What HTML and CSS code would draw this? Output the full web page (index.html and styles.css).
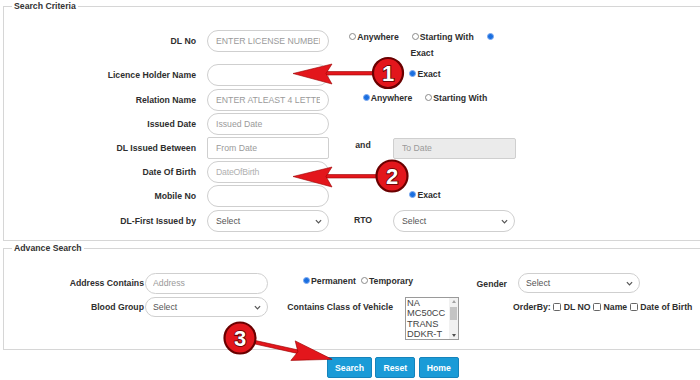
FILE: index.html
```html
<!DOCTYPE html>
<html>
<head>
<meta charset="utf-8">
<link rel="stylesheet" href="styles.css">
</head>
<body>
<fieldset class="box">
  <legend>Search Criteria</legend>
  <div class="sc">
    <label class="lbl">DL No</label>
    <input class="txt c2" placeholder="ENTER LICENSE NUMBER">
    <div class="opts wrap top"><span class="opt"><input type="radio" name="dl">Anywhere</span><span class="opt"><input type="radio" name="dl">Starting With</span><span class="opt"><input type="radio" name="dl" checked><wbr>Exact</span></div>

    <label class="lbl">Licence Holder Name</label>
    <input class="txt c2">
    <div class="opts"><span class="opt"><input type="radio" name="lh" checked>Exact</span></div>

    <label class="lbl">Relation Name</label>
    <input class="txt c2" placeholder="ENTER ATLEAST 4 LETTERS">
    <div class="opts"><span class="opt"><input type="radio" name="rn" checked>Anywhere</span><span class="opt"><input type="radio" name="rn">Starting With</span></div>

    <label class="lbl">Issued Date</label>
    <input class="txt c2" placeholder="Issued Date">

    <label class="lbl">DL Issued Between</label>
    <input class="txt c2 sq" placeholder="From Date">
    <span class="mid and">and</span>
    <input class="txt c4 sq dis" placeholder="To Date" disabled>

    <label class="lbl">Date Of Birth</label>
    <input class="txt c2 thin" placeholder="DateOfBirth">

    <label class="lbl">Mobile No</label>
    <input class="txt c2">
    <div class="opts"><span class="opt"><input type="radio" name="mn" checked>Exact</span></div>

    <label class="lbl">DL-First Issued by</label>
    <span class="sel c2"><select><option>Select</option></select><svg class="chev" viewBox="0 0 8 5"><path d="M1 1l3 3 3-3" fill="none" stroke="#555" stroke-width="1.4"/></svg></span>
    <span class="mid rto">RTO</span>
    <span class="sel c4"><select><option>Select</option></select><svg class="chev" viewBox="0 0 8 5"><path d="M1 1l3 3 3-3" fill="none" stroke="#555" stroke-width="1.4"/></svg></span>
  </div>
</fieldset>

<fieldset class="box box2">
  <legend>Advance Search</legend>
  <div class="adv">
    <label class="albl">Address Contains</label>
    <input class="txt atxt" placeholder="Address">
    <div class="aopts"><span class="opt"><input type="radio" name="ad" checked>Permanent</span><span class="opt"><input type="radio" name="ad">Temporary</span></div>
    <label class="glbl">Gender</label>
    <span class="sel asel gsel"><select><option>Select</option></select><svg class="chev" viewBox="0 0 8 5"><path d="M1 1l3 3 3-3" fill="none" stroke="#555" stroke-width="1.4"/></svg></span>

    <label class="albl rb">Blood Group</label>
    <span class="sel asel rb"><select><option>Select</option></select><svg class="chev" viewBox="0 0 8 5"><path d="M1 1l3 3 3-3" fill="none" stroke="#555" stroke-width="1.4"/></svg></span>
    <label class="cls rb">Contains Class of Vehicle</label>
    <div class="listbox">
      <div class="lbopts"><div>NA</div><div>MC50CC</div><div>TRANS</div><div>DDKR-T</div></div>
      <div class="sbar"><span class="up"></span><span class="thumb"></span><span class="dn"></span></div>
    </div>
    <div class="order rb">OrderBy:<input type="checkbox">DL NO<input type="checkbox">Name<input type="checkbox">Date of Birth</div>
  </div>
</fieldset>

<div class="btns">
  <button class="btn">Search</button>
  <button class="btn">Reset</button>
  <button class="btn">Home</button>
</div>

<svg class="marks" width="700" height="380" viewBox="0 0 700 380">
  <g class="arrow">
    <rect x="324" y="71.5" width="52" height="3.5"/>
    <polygon points="293,73.5 332,64 326,73.5 332,84"/>
  </g>
  <circle class="badge" cx="388" cy="73" r="15"/>
  <text class="num" x="388" y="81">1</text>

  <g class="arrow">
    <rect x="324" y="174.5" width="54" height="3.5"/>
    <polygon points="293,176.5 332,167 326,176.5 332,187"/>
  </g>
  <circle class="badge" cx="392" cy="176" r="15.5"/>
  <text class="num" x="392" y="184">2</text>

  <g class="arrow" transform="translate(254 342) rotate(12.5)">
    <rect x="0" y="-1.75" width="46" height="3.5"/>
    <polygon points="80,0 40,-10 45,0 40,10"/>
  </g>
  <circle class="badge" cx="240" cy="338" r="15.5"/>
  <text class="num" x="240" y="346">3</text>
</svg>
</body>
</html>
```
FILE: styles.css
```css
* { box-sizing: border-box; }
html, body { margin: 0; background: #fff; }
body {
  position: relative;
  width: 700px;
  height: 380px;
  overflow: hidden;
  font-family: "Liberation Sans", Arial, sans-serif;
  font-size: 8.7px;
  color: #2e2e2e;
}

.box {
  margin: 0 0 0 3px;
  padding: 0;
  border: 1px solid #d6d6d6;
  border-right: none;
  min-width: 0;
}
.box legend {
  margin-left: 8px;
  padding: 0 2px;
  font-weight: bold;
  font-size: 8.7px;
  line-height: 12px;
  color: #333;
}
.box2 { margin-top: 1px; }

/* Search criteria grid */
.sc {
  display: grid;
  grid-template-columns: 203px 126px 60px 124px;
  grid-template-rows: 45px 24px 25px 24px 24px 24px 24px 25px;
  align-items: center;
  padding: 6px 0 7px;
}
.lbl {
  grid-column: 1;
  text-align: right;
  padding-right: 11px;
  font-weight: bold;
}
.c2 { grid-column: 2; }
.c4 { grid-column: 4; }
.mid {
  grid-column: 3;
  text-align: center;
  font-weight: bold;
}
.and { margin-top: -6px; }
.rto { margin-top: -2px; }

.txt {
  width: 122px;
  height: 22px;
  margin: 0;
  border: 1px solid #cfcfcf;
  border-radius: 11px;
  padding: 0 8px;
  font-family: "Liberation Sans", Arial, sans-serif;
  font-size: 8.7px;
  color: #333;
  background: #fff;
  outline: none;
}
.txt::placeholder { color: #9a9a9a; }
.thin::placeholder { color: #b0b0b0; letter-spacing: -0.2px; }
.sq { border-radius: 2px; }
.dis { background: #ebebeb; height: 21px; width: 123px; }

.opts {
  grid-column: 3 / 5;
  justify-self: center;
  text-align: center;
  white-space: nowrap;
  font-weight: bold;
  line-height: 16px;
  margin-top: -3px;
}
.opts.wrap {
  white-space: normal;
  width: 158px;
}
.opts.top {
  align-self: start;
  margin-top: 11px;
  margin-left: -6px;
}
.opt { white-space: nowrap; }
.opts .opt + .opt { margin-left: 13px; }
.opt input[type="radio"] {
  appearance: none;
  -webkit-appearance: none;
  width: 7px;
  height: 7px;
  margin: 0 1px 0 0;
  border: 1px solid #8a8a8a;
  border-radius: 50%;
  background: #fff;
  vertical-align: 0;
}
.opt input[type="radio"]:checked {
  background: #1a6fe0;
  border-color: #7eaaf0;
}

/* selects */
.sel {
  position: relative;
  display: inline-block;
  width: 122px;
  height: 22px;
}
.sel select {
  appearance: none;
  -webkit-appearance: none;
  width: 100%;
  height: 100%;
  margin: 0;
  border: 1px solid #cfcfcf;
  border-radius: 11px;
  padding: 0 8px;
  background: #fff;
  font-family: "Liberation Sans", Arial, sans-serif;
  font-size: 8.7px;
  color: #555;
  outline: none;
}
.chev {
  position: absolute;
  right: 7px;
  top: 50%;
  width: 7px;
  height: 5px;
  margin-top: -2px;
}

/* Advance search grid */
.adv {
  display: grid;
  grid-template-columns: 141px 123px 133px 60px 57px 1fr;
  grid-template-rows: 24px 48px;
  align-items: center;
  padding: 17px 0 6px;
}
.albl {
  grid-column: 1;
  text-align: right;
  padding-right: 1px;
  font-weight: bold;
}
.atxt { width: 123px; height: 21px; border-radius: 11px; padding: 0 7px; }
.aopts {
  grid-column: 3 / 5;
  padding-left: 35px;
  font-weight: bold;
  white-space: nowrap;
  margin-top: -5px;
}
.aopts .opt + .opt { margin-left: 5px; }
.glbl {
  grid-column: 5;
  text-align: right;
  padding-right: 11px;
  font-weight: bold;
  margin-top: 2px;
}
.asel { width: 123px; height: 20px; }
.asel select { border-radius: 10px; padding: 0 7px; }
.gsel { grid-column: 6; width: 122px; height: 20px; }

.rb {
  align-self: start;
  margin-top: 2px;
  line-height: 20px;
}
.cls {
  grid-column: 3;
  text-align: right;
  padding-right: 8px;
  font-weight: bold;
}

.listbox {
  grid-column: 4;
  align-self: start;
  margin: 2px 0 0 4px;
  width: 54px;
  height: 43px;
  border: 1px solid #9a9a9a;
  display: flex;
  background: #fff;
}
.lbopts {
  flex: 1;
  padding-left: 1px;
  font-size: 9.3px;
  line-height: 10.25px;
  color: #444;
  overflow: hidden;
}
.sbar {
  width: 9px;
  display: flex;
  flex-direction: column;
  align-items: center;
  background: #f1f1f1;
  padding: 2px 0;
}
.sbar .up, .sbar .dn {
  width: 0;
  height: 0;
  border-left: 2.5px solid transparent;
  border-right: 2.5px solid transparent;
}
.sbar .up { border-bottom: 3px solid #a3a3a3; }
.sbar .dn { border-top: 3px solid #505050; margin-top: auto; }
.sbar .thumb {
  width: 7px;
  height: 13px;
  margin-top: 4px;
  background: #c4c4c4;
}

.order {
  grid-column: 5 / 7;
  padding-left: 52px;
  font-weight: bold;
  white-space: nowrap;
}
.order input[type="checkbox"] {
  appearance: none;
  -webkit-appearance: none;
  width: 8px;
  height: 8px;
  margin: 0 2.5px 0 2.5px;
  border: 1px solid #666;
  border-radius: 1.5px;
  background: #fff;
  vertical-align: -1px;
}

/* buttons */
.btns {
  display: flex;
  gap: 3.5px;
  margin: 7px 0 0 327px;
}
.btn {
  height: 21px;
  margin: 0;
  padding: 0 7px;
  border: 1px solid #1583bb;
  border-radius: 2px;
  background: #1a9bd7;
  color: #fff;
  font-family: "Liberation Sans", Arial, sans-serif;
  font-size: 8.7px;
  font-weight: bold;
}

/* annotation overlay */
.marks {
  position: absolute;
  left: 0;
  top: 0;
  pointer-events: none;
}
.arrow rect, .arrow polygon {
  fill: #e3161c;
  stroke: #9c0000;
  stroke-width: 0.6;
}
.badge {
  fill: #e3161c;
  stroke: #6a0000;
  stroke-width: 2.2;
}
.num {
  font-family: "Liberation Sans", Arial, sans-serif;
  font-size: 22px;
  font-weight: bold;
  text-anchor: middle;
  fill: #fff;
  stroke: #5a0000;
  stroke-width: 1.6;
  paint-order: stroke;
}
```
